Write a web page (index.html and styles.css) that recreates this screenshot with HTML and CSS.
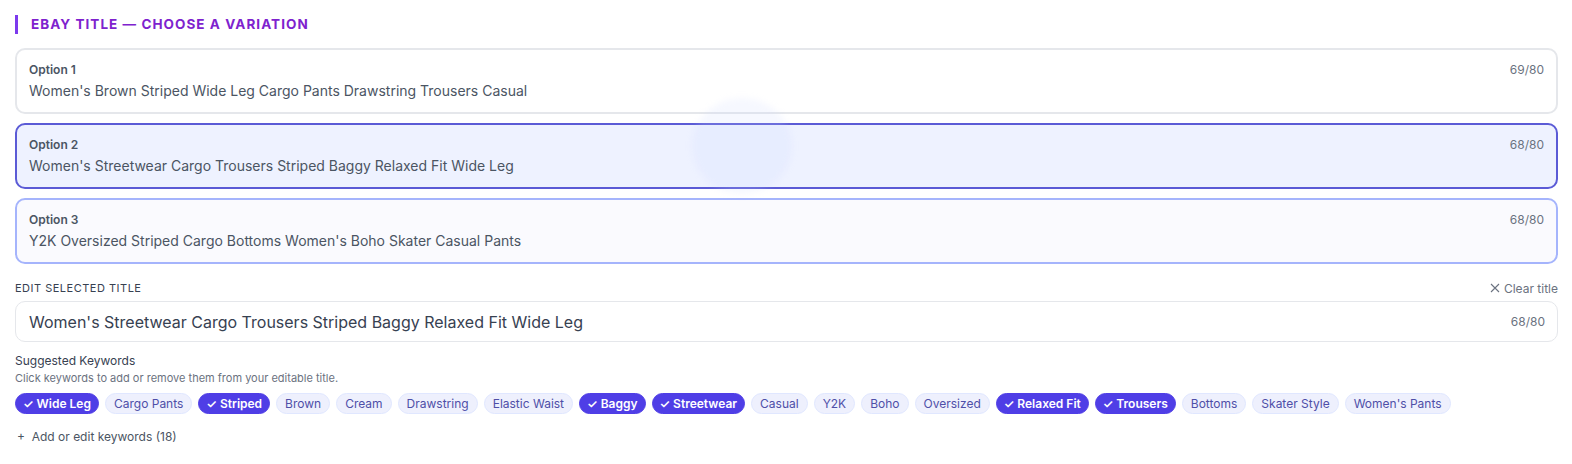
FILE: index.html
```html
<!DOCTYPE html>
<html lang="en">
<head>
    <meta charset="UTF-8">
    <meta name="viewport" content="width=device-width, initial-scale=1.0">
    <title>eBay Title</title>
    <link rel="stylesheet" href="styles.css">
</head>
<body>
    <div class="panel">
        <!-- Section header -->
        <h2 class="section-title">eBay Title — Choose a Variation</h2>

        <!-- Title variations -->
        <div class="options">
            <div class="option">
                <div class="option-head">
                    <span class="option-label">Option 1</span>
                    <span class="count">69/80</span>
                </div>
                <div class="option-text">Women's Brown Striped Wide Leg Cargo Pants Drawstring Trousers Casual</div>
            </div>
            <div class="option selected">
                <div class="option-head">
                    <span class="option-label">Option 2</span>
                    <span class="count">68/80</span>
                </div>
                <div class="option-text">Women's Streetwear Cargo Trousers Striped Baggy Relaxed Fit Wide Leg</div>
            </div>
            <div class="option hovered">
                <div class="option-head">
                    <span class="option-label">Option 3</span>
                    <span class="count">68/80</span>
                </div>
                <div class="option-text">Y2K Oversized Striped Cargo Bottoms Women's Boho Skater Casual Pants</div>
            </div>
            <div class="glow"></div>
        </div>

        <!-- Editable title -->
        <div class="edit-head">
            <span class="edit-label">Edit selected title</span>
            <span class="clear">
                <svg width="10" height="10" viewBox="0 0 10 10"><path d="M1 1L9 9M9 1L1 9" stroke="#6b7280" stroke-width="1.1" fill="none"/></svg>
                Clear title
            </span>
        </div>
        <div class="edit-box">
            <span class="edit-text">Women's Streetwear Cargo Trousers Striped Baggy Relaxed Fit Wide Leg</span>
            <span class="count">68/80</span>
        </div>

        <!-- Keywords -->
        <div class="kw-title">Suggested Keywords</div>
        <div class="kw-hint">Click keywords to add or remove them from your editable title.</div>
        <div class="chips">
            <span class="chip on"><span class="tick">✓</span>Wide Leg</span>
            <span class="chip">Cargo Pants</span>
            <span class="chip on"><span class="tick">✓</span>Striped</span>
            <span class="chip">Brown</span>
            <span class="chip">Cream</span>
            <span class="chip">Drawstring</span>
            <span class="chip">Elastic Waist</span>
            <span class="chip on"><span class="tick">✓</span>Baggy</span>
            <span class="chip on"><span class="tick">✓</span>Streetwear</span>
            <span class="chip">Casual</span>
            <span class="chip">Y2K</span>
            <span class="chip">Boho</span>
            <span class="chip">Oversized</span>
            <span class="chip on"><span class="tick">✓</span>Relaxed Fit</span>
            <span class="chip on"><span class="tick">✓</span>Trousers</span>
            <span class="chip">Bottoms</span>
            <span class="chip">Skater Style</span>
            <span class="chip">Women's Pants</span>
        </div>
        <div class="add-kw">+&nbsp; Add or edit keywords (18)</div>
    </div>
</body>
</html>
```

FILE: styles.css
```css
/* Global */
body {
    margin: 0;
    padding: 0;
    background: #ffffff;
    font-family: Inter, 'Noto Sans', sans-serif;
    color: #374151;
}

.panel {
    padding: 15px 14px 0 15px;
}

/* Header */
.section-title {
    margin: 0;
    height: 19px;
    line-height: 19px;
    border-left: 3px solid #7c3aed;
    padding-left: 13px;
    font-size: 13.5px;
    font-weight: 700;
    letter-spacing: 1.05px;
    text-transform: uppercase;
    color: #7e22ce;
}

/* Options */
.options {
    position: relative;
    display: flex;
    flex-direction: column;
    gap: 9px;
    margin-top: 14px;
}

.option {
    position: relative;
    z-index: 1;
    border: 2px solid #e5e7eb;
    border-radius: 10px;
    padding: 11px 12px 11px 12px;
    background: #ffffff;
}

.option.selected {
    border-color: #5b5bd6;
    background: rgba(224, 231, 255, 0.55);
}

.option.hovered {
    border-color: #a5b4fc;
    background: rgba(248, 248, 253, 0.7);
}

.option-head {
    display: flex;
    justify-content: space-between;
    align-items: center;
    height: 16px;
}

.option-label {
    font-size: 12px;
    font-weight: 600;
    color: #4b5563;
}

.count {
    font-size: 12px;
    color: #6b7280;
}

.option-text {
    margin-top: 4px;
    font-size: 14px;
    line-height: 20px;
    color: #4b5563;
}

.glow {
    position: absolute;
    left: 677px;
    top: 50px;
    width: 100px;
    height: 96px;
    border-radius: 50%;
    background: rgba(199, 210, 254, 0.16);
    filter: blur(3px);
    z-index: 2;
    pointer-events: none;
}

/* Edit title */
.edit-head {
    display: flex;
    justify-content: space-between;
    align-items: center;
    margin-top: 17px;
    height: 14px;
}

.edit-label {
    font-size: 11px;
    letter-spacing: 0.5px;
    text-transform: uppercase;
    color: #374151;
}

.clear {
    display: flex;
    align-items: center;
    gap: 4px;
    font-size: 12px;
    color: #6b7280;
}

.edit-box {
    display: flex;
    justify-content: space-between;
    align-items: center;
    margin-top: 6px;
    height: 39px;
    border: 1px solid #e5e7eb;
    border-radius: 10px;
    padding: 0 12px 0 13px;
}

.edit-text {
    font-size: 16px;
    color: #374151;
}

/* Keywords */
.kw-title {
    margin-top: 11px;
    font-size: 12px;
    line-height: 16px;
    color: #374151;
}

.kw-hint {
    margin-top: 1px;
    font-size: 11px;
    line-height: 16px;
    color: #6b7280;
}

.chips {
    display: flex;
    flex-wrap: wrap;
    gap: 6px;
    margin-top: 7px;
}

.chip {
    display: inline-flex;
    align-items: center;
    height: 19px;
    padding: 0 8px;
    border: 1px solid #e0e7ff;
    border-radius: 11px;
    background: #eef0fd;
    font-size: 12px;
    color: #4f4fa8;
}

.chip.on {
    background: #4f3ee6;
    border-color: #4f3ee6;
    color: #ffffff;
    font-weight: 600;
    padding: 0 7px;
}

.tick {
    font-size: 12px;
    margin-right: 3px;
}

.add-kw {
    margin-top: 15px;
    padding-left: 2px;
    font-size: 12px;
    color: #4b5563;
}
```
